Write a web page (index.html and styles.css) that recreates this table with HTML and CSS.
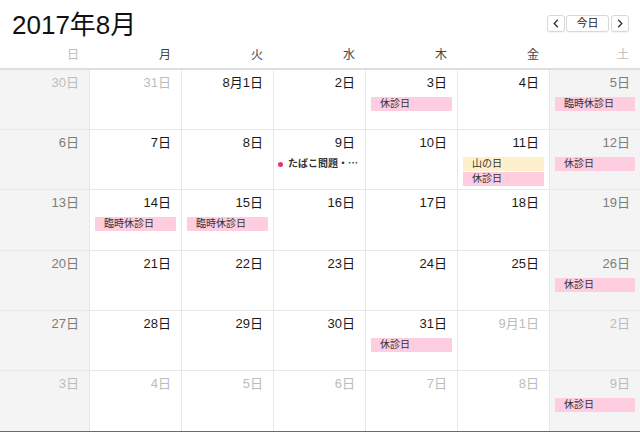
FILE: index.html
```html
<!DOCTYPE html>
<html lang="ja">
<head>
<meta charset="utf-8">
<link rel="stylesheet" href="styles.css">
</head>
<body>
<div class="topbar">
  <h1 class="title">2017年8月</h1>
  <div class="nav">
    <button class="btn btn-icon" aria-label="前へ"><svg width="6" height="9" viewBox="0 0 6 9"><path d="M4.8 0.8 L1.2 4.5 L4.8 8.2" fill="none" stroke="#333" stroke-width="1.3"/></svg></button>
    <button class="btn btn-today">今日</button>
    <button class="btn btn-icon" aria-label="次へ"><svg width="6" height="9" viewBox="0 0 6 9"><path d="M1.2 0.8 L4.8 4.5 L1.2 8.2" fill="none" stroke="#333" stroke-width="1.3"/></svg></button>
  </div>
</div>
<div class="weekdays">
  <div class="wd wd-off">日</div>
  <div class="wd">月</div>
  <div class="wd">火</div>
  <div class="wd">水</div>
  <div class="wd">木</div>
  <div class="wd">金</div>
  <div class="wd wd-off">土</div>
</div>
<div class="grid">
  <!-- row 1 -->
  <div class="cell weekend"><div class="date other">30日</div></div>
  <div class="cell"><div class="date other">31日</div></div>
  <div class="cell"><div class="date">8月1日</div></div>
  <div class="cell"><div class="date">2日</div></div>
  <div class="cell"><div class="date">3日</div><div class="ev pink">休診日</div></div>
  <div class="cell"><div class="date">4日</div></div>
  <div class="cell weekend"><div class="date">5日</div><div class="ev pink">臨時休診日</div></div>
  <!-- row 2 -->
  <div class="cell weekend"><div class="date">6日</div></div>
  <div class="cell"><div class="date">7日</div></div>
  <div class="cell"><div class="date">8日</div></div>
  <div class="cell"><div class="date">9日</div><div class="ev dot-ev"><span class="dot"></span>たばこ問題・⋯</div></div>
  <div class="cell"><div class="date">10日</div></div>
  <div class="cell"><div class="date">11日</div><div class="ev yellow">山の日</div><div class="ev pink">休診日</div></div>
  <div class="cell weekend"><div class="date">12日</div><div class="ev pink">休診日</div></div>
  <!-- row 3 -->
  <div class="cell weekend"><div class="date">13日</div></div>
  <div class="cell"><div class="date">14日</div><div class="ev pink">臨時休診日</div></div>
  <div class="cell"><div class="date">15日</div><div class="ev pink">臨時休診日</div></div>
  <div class="cell"><div class="date">16日</div></div>
  <div class="cell"><div class="date">17日</div></div>
  <div class="cell"><div class="date">18日</div></div>
  <div class="cell weekend"><div class="date">19日</div></div>
  <!-- row 4 -->
  <div class="cell weekend"><div class="date">20日</div></div>
  <div class="cell"><div class="date">21日</div></div>
  <div class="cell"><div class="date">22日</div></div>
  <div class="cell"><div class="date">23日</div></div>
  <div class="cell"><div class="date">24日</div></div>
  <div class="cell"><div class="date">25日</div></div>
  <div class="cell weekend"><div class="date">26日</div><div class="ev pink">休診日</div></div>
  <!-- row 5 -->
  <div class="cell weekend"><div class="date">27日</div></div>
  <div class="cell"><div class="date">28日</div></div>
  <div class="cell"><div class="date">29日</div></div>
  <div class="cell"><div class="date">30日</div></div>
  <div class="cell"><div class="date">31日</div><div class="ev pink">休診日</div></div>
  <div class="cell"><div class="date other">9月1日</div></div>
  <div class="cell weekend"><div class="date other">2日</div></div>
  <!-- row 6 -->
  <div class="cell weekend"><div class="date other">3日</div></div>
  <div class="cell"><div class="date other">4日</div></div>
  <div class="cell"><div class="date other">5日</div></div>
  <div class="cell"><div class="date other">6日</div></div>
  <div class="cell"><div class="date other">7日</div></div>
  <div class="cell"><div class="date other">8日</div></div>
  <div class="cell weekend"><div class="date other">9日</div><div class="ev pink">休診日</div></div>
</div>
</body>
</html>
```
FILE: styles.css
```css
* { box-sizing: border-box; }
html, body {
  margin: 0;
  padding: 0;
  background: #fff;
  font-family: "Liberation Sans", "Noto Sans CJK JP", sans-serif;
  color: #222;
}
body { width: 640px; height: 432px; overflow: hidden; }

.topbar {
  display: flex;
  justify-content: space-between;
  align-items: flex-start;
  height: 42px;
  padding: 0 11px 0 12px;
}
.title {
  margin: 10px 0 0 0;
  font-size: 26px;
  line-height: 30px;
  font-weight: normal;
  color: #111;
}
.nav {
  display: flex;
  gap: 1px;
  margin-top: 15px;
}
.btn {
  height: 17px;
  padding: 0;
  border: 1px solid #d8d8d8;
  border-radius: 3px;
  background: #fff;
  font-family: inherit;
  font-size: 11px;
  line-height: 15px;
  color: #222;
  display: flex;
  align-items: center;
  justify-content: center;
  box-shadow: 0 1px 0 rgba(0,0,0,0.04);
}
.btn-icon { width: 18px; }
.btn-today { width: 43px; margin-right: 1px; }

.weekdays {
  display: grid;
  grid-template-columns: 90px repeat(5, 92px) 90px;
  height: 28px;
  border-bottom: 2px solid #dedede;
}
.wd {
  text-align: right;
  padding-right: 11px;
  font-size: 12px;
  line-height: 26px;
  color: #444;
}
.wd-off { color: #bdbdbd; }

.grid {
  display: grid;
  grid-template-columns: 90px repeat(5, 92px) 90px;
  grid-template-rows: repeat(6, 1fr);
  height: 362px;
  border-bottom: 1px solid #6a6a6a;
}
.cell {
  border-right: 1px solid #e8e8e8;
  border-bottom: 1px solid #e8e8e8;
  padding-top: 5px;
  overflow: hidden;
}
.cell:nth-child(7n) { border-right: none; }
.cell:nth-last-child(-n+7) { border-bottom: none; }
.weekend { background: #f4f4f4; }

.date {
  text-align: right;
  padding-right: 10px;
  font-size: 13px;
  line-height: 16px;
  height: 16px;
  color: #1a1a1a;
}
.weekend .date { color: #7c7c7c; }
.date.other, .weekend .date.other { color: #bcbcbc; }

.ev {
  height: 14px;
  margin: 0 5px 1px 5px;
  padding-left: 9px;
  font-size: 10px;
  line-height: 14px;
  color: #333;
  white-space: nowrap;
  overflow: hidden;
}
.date + .ev { margin-top: 6px; }
.pink { background: #ffcde0; }
.yellow { background: #fdf0ca; }
.dot-ev {
  display: flex;
  align-items: center;
  padding-left: 0;
  margin-left: 4px;
  font-weight: bold;
  color: #333;
}
.dot {
  width: 5px;
  height: 5px;
  border-radius: 50%;
  background: #e8316f;
  margin: 0 5px 0 0;
  flex: none;
}
```
